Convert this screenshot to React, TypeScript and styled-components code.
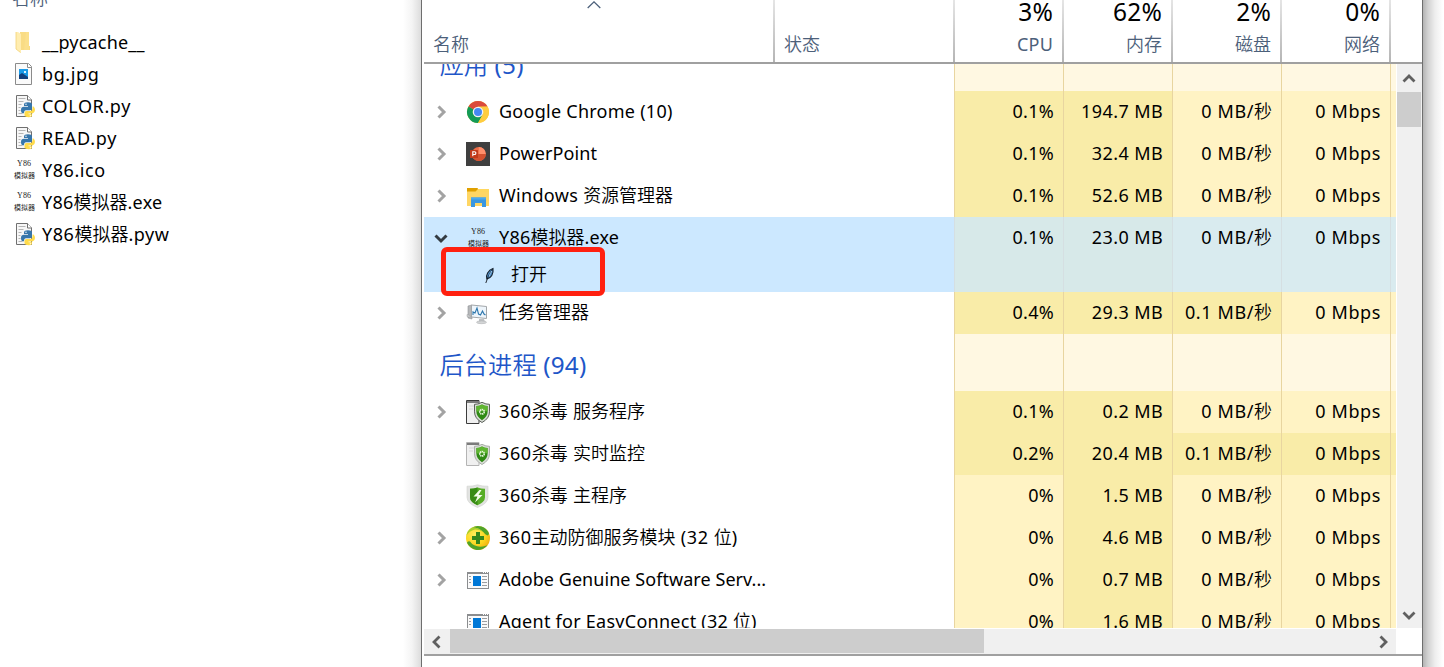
import React from 'react';
import styled, { createGlobalStyle } from 'styled-components';

const GlobalStyle = createGlobalStyle`
  *, *::before, *::after { box-sizing: border-box; }
  body {
    margin: 0;
    background: #fff;
    overflow: hidden;
    font-family: 'Noto Sans', 'Noto Sans CJK SC', sans-serif;
    font-size: 18px;
    color: #000;
  }
`;

const Desktop = styled.div`
  display: flex;
  width: 1444px;
  height: 667px;
  overflow: hidden;
`;

/* ---------- text ---------- */

const LatinRun = styled.span<{ $tracking: number }>`
  letter-spacing: ${(p) => p.$tracking}px;
`;
const HanRun = styled.span`
  font-family: 'Noto Sans CJK SC', sans-serif;
  font-weight: 350;
  line-height: 0;
`;

function Mixed({ text, tracking = 0.2 }: { text: string; tracking?: number }) {
  const runs = text.match(/[\u4e00-\u9fff]+|[^\u4e00-\u9fff]+/g) ?? [];
  return (
    <>
      {runs.map((run, i) =>
        /[\u4e00-\u9fff]/.test(run) ? (
          <HanRun key={i}>{run}</HanRun>
        ) : (
          <LatinRun key={i} $tracking={tracking}>
            {run}
          </LatinRun>
        ),
      )}
    </>
  );
}

/* ---------- explorer ---------- */

const Explorer = styled.aside`
  width: 421px;
  flex: none;
  background: linear-gradient(to right, #fff 403px, #f4f4f4 412px, #dcdcdc 421px);
`;
const ExplorerTop = styled.div`
  height: 26px;
  padding-left: 12px;
  overflow: hidden;
  color: #4c607a;
  line-height: 24px;
  & > div { margin-top: -14px; }
`;
const FileRow = styled.div`
  display: flex;
  align-items: center;
  gap: 6px;
  height: 32px;
  padding-left: 12px;
  line-height: 32px;
  white-space: pre;
  & > svg { flex: none; }
`;

/* ---------- task manager ---------- */

const Window = styled.main`
  display: flex;
  flex-direction: column;
  width: 1002px;
  flex: none;
  padding-left: 2px;
  background: #fff;
  border-left: 1px solid #6e6e6e;
  border-right: 1px solid #6e6e6e;
`;
const Shadow = styled.div`
  flex: 1;
  background: linear-gradient(to right, #b4b4b4, #d2d2d2 5px, #eeeeee 12px, #fff 20px);
`;
const Header = styled.header`
  display: flex;
  height: 64px;
  border-bottom: 2px solid #a0a0a0;
  color: #4c607a;
`;
const HeaderCell = styled.div<{ $width: number; $right?: boolean }>`
  position: relative;
  display: flex;
  flex-direction: column;
  justify-content: flex-end;
  width: ${(p) => p.$width}px;
  padding: ${(p) => (p.$right ? '0 9px 0 0' : '0 0 0 9px')};
  text-align: ${(p) => (p.$right ? 'right' : 'left')};
  border-right: 2px solid;
  border-image: linear-gradient(#e6e6e6, #b4b4b4) 1;
`;
const Total = styled.div`
  height: 26px;
  color: #000;
  font-size: 24.5px;
  line-height: 24px;
`;
const Label = styled.div`
  height: 36px;
  line-height: 36px;
`;
const SortMark = styled.svg`
  position: absolute;
  left: 163px;
  top: 1px;
`;

const Body = styled.div`
  display: flex;
  height: 565px;
`;
const Table = styled.div`
  width: 972px;
  height: 564px;
  flex: none;
  overflow: hidden;
  & > :first-child { margin-top: -30px; }
`;
const Row = styled.div<{ $height: number; $selected?: boolean }>`
  display: flex;
  height: ${(p) => p.$height}px;
  background: ${(p) => (p.$selected ? '#cce8ff' : '#fff')};
`;
const NameCell = styled.div`
  position: relative;
  width: 530px;
  flex: none;
`;
const NameLine = styled.div`
  display: flex;
  align-items: center;
  height: 42px;
  padding-left: 10px;
  white-space: pre;
  & > svg { flex: none; }
`;
const ChevronSlot = styled.span`
  display: flex;
  width: 32px;
`;
const ProcessName = styled.span`
  height: 42px;
  margin-left: 9px;
  line-height: 40px;
`;
const ChildLine = styled.div`
  display: flex;
  align-items: center;
  gap: 16px;
  height: 33px;
  padding-left: 60px;
`;
const ChildName = styled.span`
  height: 33px;
  line-height: 31px;
`;
const Highlight = styled.div`
  position: absolute;
  left: 17px;
  top: 30px;
  width: 164px;
  height: 49px;
  border: 5px solid #ff2010;
  border-radius: 6px;
`;
const GroupName = styled.div`
  padding-left: 15.5px;
  color: #1e56c8;
  font-size: 24.3px;
  line-height: 61px;
`;

type Heat = 'none' | 'low' | 'mid' | 'selLow' | 'selMid';
const heatColor: Record<Heat, string> = {
  none: '#fff8e2',
  low: '#fff3c4',
  mid: '#f9eca8',
  selLow: '#d9ebef',
  selMid: '#d7e9e9',
};
const Cell = styled.div<{ $heat: Heat; $narrow?: boolean }>`
  width: ${(p) => (p.$narrow ? 6 : 109)}px;
  flex: none;
  padding-right: ${(p) => (p.$narrow ? 0 : 9)}px;
  border-left: 1px solid ${(p) => (p.$heat.startsWith('sel') ? '#d5dfe2' : '#e8d5a0')};
  background: ${(p) => heatColor[p.$heat]};
  line-height: 40px;
  text-align: right;
  white-space: pre;
`;

/* ---------- scroll bars ---------- */

const VTrack = styled.div`
  display: flex;
  flex-direction: column;
  width: 25px;
  height: 564px;
  margin-left: 1px;
  background: #f0f0f0;
`;
const VButton = styled.div`
  display: flex;
  align-items: center;
  justify-content: center;
  height: 28px;
  padding: 2px 1px 0 0;
`;
const VThumb = styled.div`
  width: 24px;
  height: 35px;
  margin-bottom: auto;
  background: #cdcdcd;
`;
const HTrack = styled.div`
  display: flex;
  align-items: center;
  width: 972px;
  height: 25px;
  background: #f0f0f0;
`;
const HButton = styled.div`
  display: flex;
  align-items: center;
  justify-content: center;
  width: 26px;
  height: 25px;
`;
const HThumb = styled.div`
  width: 534px;
  height: 24px;
  margin: 0 auto 1px 0;
  background: #cdcdcd;
`;
const Footer = styled.footer`
  flex: 1;
  border-top: 2px solid #a0a0a0;
`;

/* ---------- icons ---------- */

type Dir = 'up' | 'down' | 'left' | 'right';
const chevronPath: Record<Dir, string> = {
  up: 'M1.5 9.5 L7 4 L12.5 9.5',
  down: 'M1.5 4.5 L7 10 L12.5 4.5',
  left: 'M9.5 1.5 L4 7 L9.5 12.5',
  right: 'M4.5 1.5 L10 7 L4.5 12.5',
};
function Chevron({ dir, color = '#606060', width = 2.8 }: { dir: Dir; color?: string; width?: number }) {
  return (
    <svg width="14" height="14" viewBox="0 0 14 14" fill="none">
      <path d={chevronPath[dir]} stroke={color} strokeWidth={width} />
    </svg>
  );
}

const FolderIcon = () => (
  <svg width="24" height="24" viewBox="0 0 24 24">
    <path d="M8 2h9v14h1v4H8z" fill="#f9dc85" />
    <path d="M14 2h3v18h-5z" fill="#fbe08c" />
    <path d="M4 2h2l3 2v19l-5-4z" fill="#ffedb0" />
    <path d="M4 2v17l4.500 3.500" fill="none" stroke="#f3d277" strokeWidth=".8" />
  </svg>
);

const ImageIcon = () => (
  <svg width="24" height="24" viewBox="0 0 24 24">
    <path d="M3.500 1.500h13l3 3v18h-16z" fill="#fafafa" stroke="#8b8b8b" />
    <path d="M15.500 1.500v4h4" fill="#fff" stroke="#8b8b8b" />
    <rect x="7" y="7" width="9" height="10" fill="#1b9be8" />
    <rect x="12" y="9" width="2" height="2" fill="#d8f3ff" />
    <path d="M7 17v-4l3-2 3 2 3 2v2z" fill="#123f7d" />
  </svg>
);

const PythonIcon = () => (
  <svg width="24" height="24" viewBox="0 0 24 24">
    <path d="M4.500 1.500h11l4 4v17h-15z" fill="#f7f7f7" stroke="#707070" />
    <path d="M15.500 1.500v4.500h4.500" fill="#fff" stroke="#707070" />
    <path d="M6.500 4.500h7M6.500 7.500h5M6.500 10.500h3M6.500 13.500h2M6.500 16.500h2M6.500 19.500h4" stroke="#b5b5b5" />
    <path d="M12 10.500q0-2.300 4-2.300t4 2.300v3.800q0 2-2 2h-4q-2 0-2 3h-1q-2 0-2-3.300t3-3.300h4v-.8h-4z" fill="#3776ab" />
    <circle cx="14" cy="10.200" r=".7" fill="#fff" />
    <path d="M20.500 12.500h1q1.500 1 1.500 3.500t-2.500 3.500h-4v.8h3.500v1.400q-.5 1.500-3.600 1.500t-3.900-1.600v-2.700q0-2 2-2h4q2 0 2-2.500z" fill="#ffdb4b" />
    <circle cx="18.300" cy="21.700" r=".6" fill="#fff" />
  </svg>
);

const TinyText = styled.text`
  font-family: 'Liberation Serif', 'Noto Sans CJK SC', serif;
  fill: #222;
`;
const Y86Icon = () => (
  <svg width="24" height="24" viewBox="0 0 24 24">
    <TinyText x="5" y="8" fontSize="8" textLength="14">Y86</TinyText>
    <TinyText x="2" y="19.500" fontSize="7" textLength="21">模拟器</TinyText>
  </svg>
);

const ChromeIcon = () => (
  <svg width="24" height="24" viewBox="0 0 24 24">
    <circle cx="12" cy="12" r="11" fill="#ffcd40" />
    <path d="M12 12 2.470 6.500A11 11 0 0 1 21.530 6.500L12 6.800z" fill="#db4a3c" />
    <path d="M12 12 2.470 6.500A11 11 0 0 0 12 23l5-8.500z" fill="#139b57" />
    <path d="M12 6.800h9.700A11 11 0 0 1 12 23l4.700-8.400z" fill="#ffcd40" />
    <circle cx="12" cy="12" r="5.300" fill="#f3f3f3" />
    <circle cx="12" cy="12" r="4" fill="#4688f4" />
  </svg>
);

const PowerPointIcon = () => (
  <svg width="24" height="24" viewBox="0 0 24 24">
    <rect width="24" height="24" fill="#3f3f3f" />
    <circle cx="12.800" cy="12" r="7" fill="#ed6c47" />
    <path d="M12.800 5a7 7 0 0 1 7 7h-7z" fill="#ff8f6b" />
    <path d="M5.800 12h14a7 7 0 0 1-14 0z" fill="#d35230" />
    <rect x="4" y="8" width="8" height="8" rx=".6" fill="#c13b1b" />
    <path d="M6.800 14.300V9.800h1.700a1.300 1.300 0 0 1 0 2.700H6.800" fill="none" stroke="#fff" strokeWidth="1.100" />
  </svg>
);

const ExplorerIcon = () => (
  <svg width="24" height="24" viewBox="0 0 24 24">
    <path d="M1 4h9l2 1h11v17H1z" fill="#ffd75e" />
    <path d="M1 4h10.500l.5 1-2.500 2.500H1z" fill="#e0a000" />
    <path d="M1 8h22v14H1z" fill="#ffd664" />
    <path d="M5 13.500h15V23h-4v-4H9v4H5z" fill="#3a97e0" />
    <path d="M5 13.500h15v2H5z" fill="#4ba9ee" />
  </svg>
);

const FeatherIcon = () => (
  <svg width="11" height="17" viewBox="0 0 11 17">
    <path d="M9 1.500Q5.500 2.500 3.600 6T2.800 12Q6 11.500 7.800 8.500T9 1.500z" fill="#4a8cc8" stroke="#15202c" strokeWidth="1.100" />
    <path d="M8.500 2.500Q4 8 1.800 16" fill="none" stroke="#10151c" strokeWidth=".9" />
    <path d="M7.800 4Q5.800 7 5 9.500" fill="none" stroke="#a8d2f4" strokeWidth=".9" />
  </svg>
);

const TaskManagerIcon = () => (
  <svg width="24" height="24" viewBox="0 0 24 24">
    <path d="M2 5l4-1v14l-4-1z" fill="#b5b7b9" stroke="#8f9193" strokeWidth=".6" />
    <path d="M5.500 4 20.500 5.500V17.500L5.500 16z" fill="#eef5fb" stroke="#a3a7aa" />
    <path d="M7 14v-3l2 1 2-5 1.500 6 2 1 2-4 1.500 3 1.500 1" fill="none" stroke="#2c76ad" strokeWidth="1.100" />
    <path d="M13 18h5l1 3h-6z" fill="#c0c3c5" />
    <ellipse cx="15.500" cy="21.300" rx="5" ry="1.400" fill="#d3d5d6" stroke="#a5a7a9" strokeWidth=".5" />
    <path d="M1 13.500l3 1v2l-3-1z" fill="#d2d4d5" stroke="#9a9c9e" strokeWidth=".5" />
  </svg>
);

function AntivirusBoxIcon({ dim = false }: { dim?: boolean }) {
  const edge = dim ? '#b4b4b4' : '#3c3c3c';
  return (
    <svg width="24" height="24" viewBox="0 0 24 24">
      <path d="M.5 .5h12.500v23H.5z" fill="#f0f0f0" stroke={edge} />
      <path d="M1 2h12" stroke="#7c7c7c" strokeWidth="2" />
      <path d="M3 6h6M3 9h4" stroke="#d6d6d6" />
      <path d="M16 2.300q4 2.200 7.500 2v7.500q0 6.700-7.500 10.700-7.500-4-7.500-10.700v-7.500q3.500.2 7.500-2z" fill="#d9dcd7" stroke={dim ? '#a3a8a0' : '#4c5249'} strokeWidth=".9" />
      <path d="M16 4.600q2.800 1.500 5.600 1.500v5.700q0 5-5.600 8.400-5.600-3.400-5.600-8.400V6.100q2.800 0 5.600-1.500z" fill="#2f8a14" />
      <path d="M16 4.600q2.800 1.500 5.600 1.500v5.200l-11.200.3V6.100q2.800 0 5.600-1.500z" fill="#5fb531" />
      <circle cx="16" cy="11.800" r="2.200" fill="none" stroke="#e7f7dc" strokeWidth="1.700" strokeDasharray="1.300 .5" />
    </svg>
  );
}

const AntivirusShieldIcon = () => (
  <svg width="24" height="24" viewBox="0 0 24 24">
    <path d="M11.500 .8q5 1.700 10.500 1.400v11q0 6.300-10.500 10.300-10.500-4-10.500-10.300v-11q5.500.3 10.500-1.400z" fill="#e2e3e1" stroke="#d0d1cf" strokeWidth=".6" />
    <path d="M11.500 3.500q4 1.300 7.500 1.200v8.500q0 4.700-7.500 8-7.500-3.300-7.500-8V4.700q3.500.1 7.500-1.200z" fill="#57ad26" />
    <path d="M11.500 3.500q-4 1.300-7.500 1.200v8.500q0 4.700 7.500 8z" fill="#388c14" />
    <path d="M13.500 6 7.500 12.500h4l-2.500 6 7.500-7.500h-4L15.500 6z" fill="#f3fdea" />
  </svg>
);

const DefenderIcon = () => (
  <svg width="24" height="24" viewBox="0 0 24 24">
    <defs>
      <radialGradient id="defenderGlow" cx=".38" cy=".35" r=".75">
        <stop offset="0" stopColor="#ffee5c" />
        <stop offset=".6" stopColor="#fbd51c" />
        <stop offset="1" stopColor="#eda511" />
      </radialGradient>
    </defs>
    <circle cx="12" cy="12" r="12" fill="url(#defenderGlow)" />
    <path d="M6 1.600A12 12 0 0 1 22.800 7Q23.300 9 21.500 9.500 19 8.500 17.500 6.200 13 1.800 6 1.600z" fill="#4fa32a" />
    <path d="M6 1.600A12 12 0 0 0 .2 10Q3 5 9 3.600 13 3.300 17 6 13 1.500 6 1.600z" fill="#a6cf2e" />
    <path d="M1 16.800Q2 14.500 4 15.500 8 21.500 17 20.500L21.500 19.300A12 12 0 0 1 1 16.800z" fill="#4fa32a" />
    <path d="M10 6h4v4h4v4h-4v4h-4v-4H6v-4h4z" fill="#35871c" />
  </svg>
);

const GenericAppIcon = () => (
  <svg width="24" height="24" viewBox="0 0 24 24">
    <rect x="1.500" y="4.500" width="21" height="16" fill="#fafafa" stroke="#8b8d8f" />
    <path d="M1 5h22" stroke="#8b8d8f" strokeWidth="2" />
    <path d="M17 4.500h1M19 4.500h1M21 4.500h1" stroke="#fff" />
    <rect x="7" y="8" width="8" height="10" fill="#0078d7" />
    <path d="M3 8.500h2M3 11.500h2M3 14.500h2M16 8.500h5M16 11.500h5M16 14.500h5M16 17.500h5" stroke="#9b9da0" />
  </svg>
);

/* ---------- data ---------- */

const files: { name: string; icon: React.ReactNode; tracking: number }[] = [
  { name: '__pycache__', icon: <FolderIcon />, tracking: 0.2 },
  { name: 'bg.jpg', icon: <ImageIcon />, tracking: 0.6 },
  { name: 'COLOR.py', icon: <PythonIcon />, tracking: 0.6 },
  { name: 'READ.py', icon: <PythonIcon />, tracking: 0.75 },
  { name: 'Y86.ico', icon: <Y86Icon />, tracking: 0.55 },
  { name: 'Y86模拟器.exe', icon: <Y86Icon />, tracking: 0.25 },
  { name: 'Y86模拟器.pyw', icon: <PythonIcon />, tracking: 0.55 },
];

const columns = [
  { total: '3%', label: 'CPU', tracking: 0.3 },
  { total: '62%', label: '内存', tracking: 0.4 },
  { total: '2%', label: '磁盘', tracking: 0.6 },
  { total: '0%', label: '网络', tracking: 0.6 },
];

interface Process {
  name: string;
  icon: React.ReactNode;
  tracking: number;
  open?: boolean;
  leaf?: boolean;
  values: string[];
  heat: string;
}

const apps: Process[] = [
  { name: 'Google Chrome (10)', icon: <ChromeIcon />, tracking: 0.26, values: ['0.1%', '194.7 MB', '0 MB/秒', '0 Mbps'], heat: 'mmll' },
  { name: 'PowerPoint', icon: <PowerPointIcon />, tracking: 0.08, values: ['0.1%', '32.4 MB', '0 MB/秒', '0 Mbps'], heat: 'mmll' },
  { name: 'Windows 资源管理器', icon: <ExplorerIcon />, tracking: 0.32, values: ['0.1%', '52.6 MB', '0 MB/秒', '0 Mbps'], heat: 'mmll' },
  { name: 'Y86模拟器.exe', icon: <Y86Icon />, tracking: 0.2, open: true, values: ['0.1%', '23.0 MB', '0 MB/秒', '0 Mbps'], heat: 'mmll' },
  { name: '任务管理器', icon: <TaskManagerIcon />, tracking: 0, values: ['0.4%', '29.3 MB', '0.1 MB/秒', '0 Mbps'], heat: 'mmml' },
];

const background: Process[] = [
  { name: '360杀毒 服务程序', icon: <AntivirusBoxIcon />, tracking: 0.6, values: ['0.1%', '0.2 MB', '0 MB/秒', '0 Mbps'], heat: 'mmll' },
  { name: '360杀毒 实时监控', icon: <AntivirusBoxIcon dim />, tracking: 0.6, leaf: true, values: ['0.2%', '20.4 MB', '0.1 MB/秒', '0 Mbps'], heat: 'mmmm' },
  { name: '360杀毒 主程序', icon: <AntivirusShieldIcon />, tracking: 0.6, leaf: true, values: ['0%', '1.5 MB', '0 MB/秒', '0 Mbps'], heat: 'lmll' },
  { name: '360主动防御服务模块 (32 位)', icon: <DefenderIcon />, tracking: 0.56, values: ['0%', '4.6 MB', '0 MB/秒', '0 Mbps'], heat: 'lmll' },
  { name: 'Adobe Genuine Software Serv...', icon: <GenericAppIcon />, tracking: 0.06, values: ['0%', '0.7 MB', '0 MB/秒', '0 Mbps'], heat: 'lmll' },
  { name: 'Agent for EasyConnect (32 位)', icon: <GenericAppIcon />, tracking: 0.26, leaf: true, values: ['0%', '1.6 MB', '0 MB/秒', '0 Mbps'], heat: 'lmll' },
];

function ProcessRow({ process }: { process: Process }) {
  const { name, icon, tracking, open, leaf, values, heat } = process;
  const toHeat = (code: string): Heat =>
    code === 'm' ? (open ? 'selMid' : 'mid') : open ? 'selLow' : 'low';
  return (
    <Row $height={open ? 75 : 42} $selected={open}>
      <NameCell>
        <NameLine>
          <ChevronSlot>
            {!leaf && <Chevron dir={open ? 'down' : 'right'} color={open ? '#333b42' : '#a3a3a3'} width={3} />}
          </ChevronSlot>
          {icon}
          <ProcessName>
            <Mixed text={name} tracking={tracking} />
          </ProcessName>
        </NameLine>
        {open && (
          <>
            <ChildLine>
              <FeatherIcon />
              <ChildName>
                <Mixed text="打开" />
              </ChildName>
            </ChildLine>
            <Highlight />
          </>
        )}
      </NameCell>
      {values.map((value, i) => (
        <Cell key={i} $heat={toHeat(heat[i])}>
          <Mixed text={value} tracking={columns[i].tracking} />
        </Cell>
      ))}
      <Cell $heat={toHeat(heat[3])} $narrow />
    </Row>
  );
}

function GroupRow({ title }: { title: string }) {
  return (
    <Row $height={57}>
      <NameCell>
        <GroupName>
          <Mixed text={title} />
        </GroupName>
      </NameCell>
      {columns.map((c) => (
        <Cell key={c.label} $heat="none" />
      ))}
      <Cell $heat="none" $narrow />
    </Row>
  );
}

export default function App() {
  return (
    <Desktop>
      <GlobalStyle />
      <Explorer>
        <ExplorerTop>
          <div>
            <Mixed text="名称" />
          </div>
        </ExplorerTop>
        {files.map((f) => (
          <FileRow key={f.name}>
            {f.icon}
            <span>
              <Mixed text={f.name} tracking={f.tracking} />
            </span>
          </FileRow>
        ))}
      </Explorer>
      <Window>
        <Header>
          <HeaderCell $width={351}>
            <SortMark width="14" height="8" viewBox="0 0 14 8" fill="none">
              <path d="M.7 7 7 .9 13.300 7" stroke="#4c607a" strokeWidth="1.300" />
            </SortMark>
            <Label>
              <Mixed text="名称" />
            </Label>
          </HeaderCell>
          <HeaderCell $width={180}>
            <Label>
              <Mixed text="状态" />
            </Label>
          </HeaderCell>
          {columns.map((c) => (
            <HeaderCell key={c.label} $width={109} $right>
              <Total>
                <Mixed text={c.total} />
              </Total>
              <Label>
                <Mixed text={c.label} />
              </Label>
            </HeaderCell>
          ))}
        </Header>
        <Body>
          <Table>
            <GroupRow title="应用 (5)" />
            {apps.map((p) => (
              <ProcessRow key={p.name} process={p} />
            ))}
            <GroupRow title="后台进程 (94)" />
            {background.map((p) => (
              <ProcessRow key={p.name} process={p} />
            ))}
          </Table>
          <VTrack>
            <VButton>
              <Chevron dir="up" />
            </VButton>
            <VThumb />
            <VButton>
              <Chevron dir="down" />
            </VButton>
          </VTrack>
        </Body>
        <HTrack>
          <HButton>
            <Chevron dir="left" />
          </HButton>
          <HThumb />
          <HButton>
            <Chevron dir="right" />
          </HButton>
        </HTrack>
        <Footer />
      </Window>
      <Shadow />
    </Desktop>
  );
}
